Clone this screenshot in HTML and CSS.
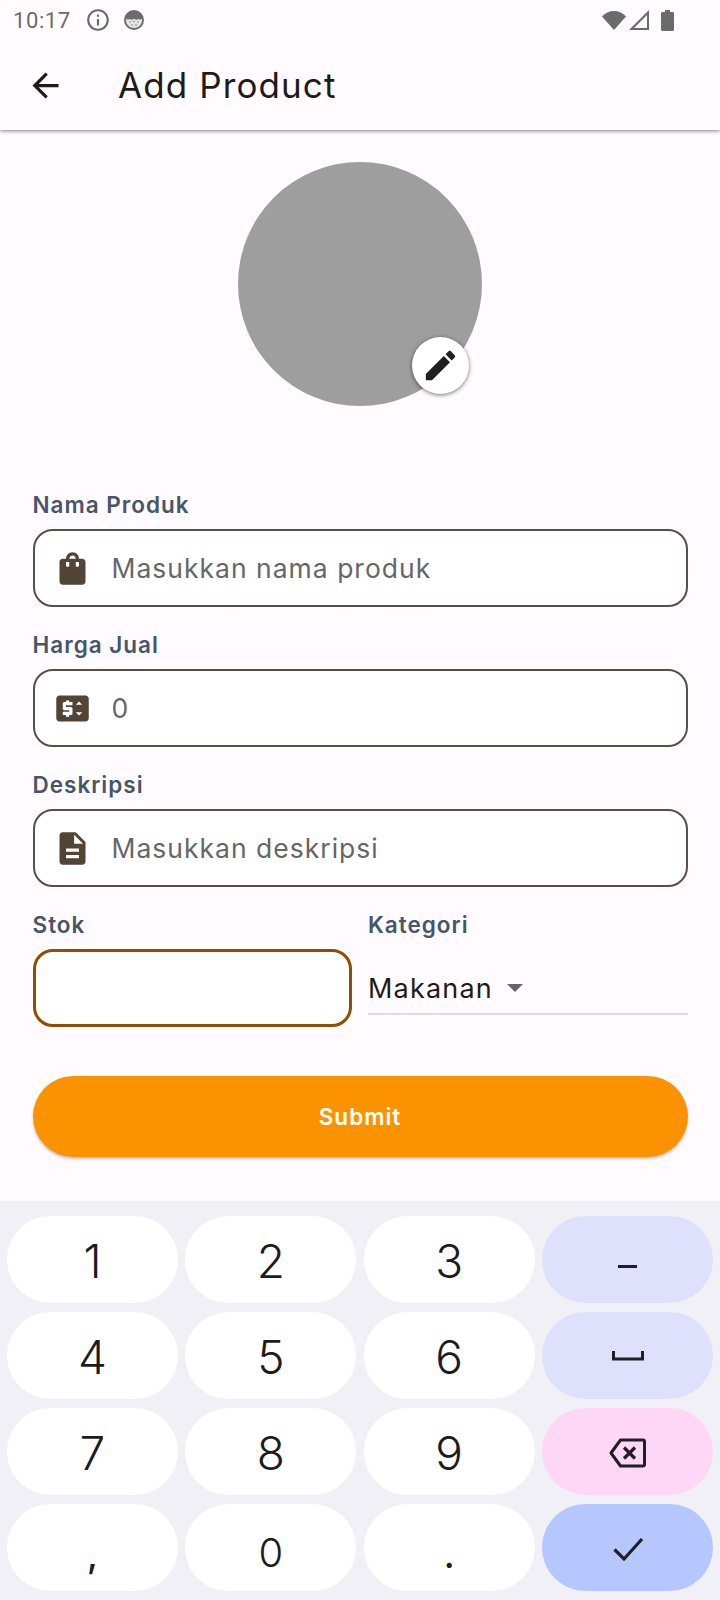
FILE: index.html
```html
<!DOCTYPE html>
<html lang="id">
<head>
    <meta charset="UTF-8">
    <meta name="viewport" content="width=device-width, initial-scale=1.0">
    <title>Add Product</title>
    <link rel="stylesheet" href="styles.css">
</head>
<body>
    <div class="screen">
        <header class="topbar">
            <div class="status">
                <span class="clock">10:17</span>
                <svg class="status-info" viewBox="0 0 24 24"><path fill-rule="evenodd" d="M11 7h2v2h-2zm0 4h2v6h-2zm1-9C6.48 2 2 6.48 2 12s4.48 10 10 10 10-4.48 10-10S17.52 2 12 2zm0 18c-4.41 0-8-3.59-8-8s3.59-8 8-8 8 3.59 8 8-3.59 8-8 8z"/></svg>
                <svg class="status-face" viewBox="0 0 20 20">
                    <circle cx="10" cy="10" r="10" fill="#6b6b6b"/>
                    <path d="M2 8.500c1 1.500 2.500 1.500 3.500.2C6.500 10 8 10 10 8.700c2 1.300 3.500 1.300 4.500 0 1 1.300 2.500 1.300 3.500-.2.500 5.500-3 9.500-8 9.500s-8.500-4-8-9.500z" fill="#e6e6e6"/>
                    <circle cx="6" cy="12" r=".8" fill="#808080"/><circle cx="10" cy="11.500" r=".8" fill="#808080"/><circle cx="14" cy="12" r=".8" fill="#808080"/>
                    <circle cx="8" cy="15" r=".8" fill="#808080"/><circle cx="12" cy="15" r=".8" fill="#808080"/>
                </svg>
                <span class="status-space"></span>
                <svg class="status-wifi" viewBox="0 0 24 20"><path d="M0 6.500C3 3 7.300 1 12 1s9 2 12 5.500L12 20z"/></svg>
                <svg class="status-signal" viewBox="0 0 20 20"><path fill-rule="evenodd" d="M20 0v20H0zM18 5 5 18h13z"/></svg>
                <svg class="status-battery" viewBox="0 0 13 21"><path d="M4 0h5v2h2.500c.8 0 1.500.7 1.500 1.500V19.500c0 .8-.7 1.500-1.500 1.500h-10C.7 21 0 20.300 0 19.500V3.500C0 2.700.7 2 1.500 2H4z"/></svg>
            </div>
            <div class="appbar">
                <svg class="back" viewBox="0 0 24 24"><path d="M20 11H7.830l5.590-5.590L12 4l-8 8 8 8 1.410-1.410L7.830 13H20v-2z"/></svg>
                <h1>Add Product</h1>
            </div>
        </header>

        <main class="form">
            <div class="avatar">
                <button class="edit" type="button">
                    <svg viewBox="0 0 24 24"><path d="M3 17.250V21h3.750L17.810 9.940l-3.750-3.750L3 17.250zM20.710 7.040c.39-.39.39-1.020 0-1.410l-2.340-2.340c-.39-.39-1.020-.39-1.410 0l-1.830 1.830 3.750 3.750 1.830-1.830z"/></svg>
                </button>
            </div>

            <div class="group first">
                <label for="nama">Nama Produk</label>
                <div class="field">
                    <svg viewBox="0 0 24 24"><path fill-rule="evenodd" d="M18 6h-2c0-2.210-1.790-4-4-4S8 3.790 8 6H6c-1.100 0-2 .9-2 2v12c0 1.100.9 2 2 2h12c1.100 0 2-.9 2-2V8c0-1.100-.9-2-2-2zm-8 4c0 .55-.45 1-1 1s-1-.45-1-1V8h2v2zm2-6c1.100 0 2 .9 2 2h-4c0-1.100.9-2 2-2zm4 6c0 .55-.45 1-1 1s-1-.45-1-1V8h2v2z"/></svg>
                    <input id="nama" type="text" placeholder="Masukkan nama produk">
                </div>
            </div>

            <div class="group">
                <label for="harga">Harga Jual</label>
                <div class="field">
                    <svg viewBox="0 0 24 24"><path fill-rule="evenodd" d="M20 4H4c-1.110 0-1.990.89-1.990 2L2 18c0 1.110.89 2 2 2h16c1.110 0 2-.89 2-2V6c0-1.110-.89-2-2-2zm-8 6H8v1h3c.55 0 1 .45 1 1v3c0 .55-.45 1-1 1h-1v1H8v-1H6v-2h4v-1H7c-.55 0-1-.45-1-1V9c0-.55.45-1 1-1h1V7h2v1h2v2zm4 6.250-2-2h4l-2 2zM14 9.750l2-2 2 2h-4z"/></svg>
                    <input id="harga" type="text" placeholder="0">
                </div>
            </div>

            <div class="group">
                <label for="deskripsi">Deskripsi</label>
                <div class="field">
                    <svg viewBox="0 0 24 24"><path fill-rule="evenodd" d="M14 2H6c-1.100 0-1.990.9-1.990 2L4 20c0 1.100.89 2 1.990 2H18c1.100 0 2-.9 2-2V8l-6-6zm2 16H8v-2h8v2zm0-4H8v-2h8v2zm-3-5V3.500L18.500 9H13z"/></svg>
                    <input id="deskripsi" type="text" placeholder="Masukkan deskripsi">
                </div>
            </div>

            <div class="split">
                <div>
                    <label for="stok">Stok</label>
                    <div class="field focused">
                        <input id="stok" type="text">
                    </div>
                </div>
                <div>
                    <label>Kategori</label>
                    <div class="dropdown">
                        <span>Makanan</span>
                        <i class="caret"></i>
                    </div>
                </div>
            </div>

            <button class="submit" type="button">Submit</button>
        </main>

        <section class="keyboard">
            <div class="key">1</div>
            <div class="key">2</div>
            <div class="key">3</div>
            <div class="key side">
                <svg viewBox="0 0 34 34"><rect x="7" y="21" width="19" height="3"/></svg>
            </div>
            <div class="key">4</div>
            <div class="key">5</div>
            <div class="key">6</div>
            <div class="key side">
                <svg viewBox="0 0 34 34"><path d="M1 11h3v6.500h26V11h3v9.500H1z"/></svg>
            </div>
            <div class="key">7</div>
            <div class="key">8</div>
            <div class="key">9</div>
            <div class="key del">
                <svg viewBox="0 0 40 34"><path fill="none" stroke="#1f1f24" stroke-width="3" stroke-linejoin="round" d="M12.500 4H35a1.500 1.500 0 0 1 1.500 1.500v23A1.500 1.500 0 0 1 35 30H12.500L3 17z"/><path fill="none" stroke="#1f1f24" stroke-width="3.200" d="M16 11.500l11 11M27 11.500l-11 11"/></svg>
            </div>
            <div class="key low">,</div>
            <div class="key zero">0</div>
            <div class="key low">.</div>
            <div class="key done">
                <svg viewBox="0 0 34 34"><path fill="none" stroke="#1f1f24" stroke-width="3.200" d="M3.500 17.500l9.500 9.500L31 7"/></svg>
            </div>
        </section>
    </div>
</body>
</html>
```

FILE: styles.css
```css
* {
    box-sizing: border-box;
}

body {
    margin: 0;
    background-color: #fffbff;
    color: #1f1b16;
    font-family: Inter, "Noto Sans", sans-serif;
}

.screen {
    width: 720px;
    height: 1600px;
    display: flex;
    flex-direction: column;
    overflow: hidden;
}

/* barra de cima */
.topbar {
    height: 130px;
    flex-shrink: 0;
    box-shadow: 0 1px 4px rgba(0, 0, 0, 0.5);
}

.status {
    height: 40px;
    padding: 0 14px 0 13px;
    display: flex;
    align-items: center;
    fill: #6b6b6b;
}

.clock {
    font-family: Roboto, sans-serif;
    font-size: 22px;
    color: #6b6b6b;
    letter-spacing: 0.6px;
}

.status-info {
    width: 26px;
    height: 26px;
    margin-left: 14px;
}

.status-face {
    width: 20px;
    height: 20px;
    margin-left: 13px;
}

.status-space {
    flex: 1;
}

.status-wifi {
    width: 24px;
    height: 20px;
}

.status-signal {
    width: 20px;
    height: 20px;
    margin-left: 3px;
}

.status-battery {
    width: 13px;
    height: 21px;
    margin-left: 12px;
    margin-right: 32px;
}

.appbar {
    height: 90px;
    display: flex;
    align-items: center;
    padding-left: 26px;
}

.back {
    width: 39px;
    height: 39px;
    fill: #1f1b16;
}

.appbar h1 {
    margin: 0 0 0 53px;
    font-size: 35px;
    font-weight: 400;
    letter-spacing: 1.1px;
}

/* formulario */
.form {
    padding: 32px 32.500px 0;
}

.avatar {
    position: relative;
    width: 244px;
    height: 244px;
    margin: 0 auto;
    border-radius: 50%;
    background-color: #9e9e9e;
}

.edit {
    position: absolute;
    left: 174px;
    top: 175px;
    width: 57px;
    height: 57px;
    padding: 0;
    border: none;
    border-radius: 50%;
    background-color: #fff;
    box-shadow: 0 1px 4px rgba(0, 0, 0, 0.55);
    display: flex;
    align-items: center;
    justify-content: center;
}

.edit svg {
    width: 39px;
    height: 39px;
    fill: #1f1f1f;
}

.group {
    margin-top: 22px;
}

.group.first {
    margin-top: 83px;
}

label {
    display: block;
    height: 28px;
    margin-bottom: 12px;
    font-size: 22.500px;
    line-height: 31px;
    font-weight: 600;
    letter-spacing: 1px;
    color: #475569;
}

.field {
    height: 78px;
    padding-left: 18px;
    display: flex;
    align-items: center;
    gap: 20px;
    background-color: #fff;
    border: 2px solid #5a4f44;
    border-radius: 20px;
}

.field svg {
    width: 39px;
    height: 39px;
    flex-shrink: 0;
    fill: #524437;
}

.field input {
    flex: 1;
    min-width: 0;
    border: none;
    outline: none;
    padding: 0;
    background: transparent;
    font-family: inherit;
    font-size: 26.500px;
    letter-spacing: 1px;
    color: #1f1b16;
}

.field input::placeholder {
    color: #666;
    opacity: 1;
}

.field.focused {
    border: 3px solid #8f4e00;
}

.split {
    margin-top: 22px;
    display: grid;
    grid-template-columns: minmax(0, 1fr) minmax(0, 1fr);
    gap: 16px;
}

.dropdown {
    height: 66px;
    padding-top: 14px;
    display: flex;
    align-items: center;
    gap: 14px;
    border-bottom: 2px solid #dcdcdc;
    font-size: 27px;
    letter-spacing: 1.2px;
}

.caret {
    width: 0;
    height: 0;
    border-left: 8px solid transparent;
    border-right: 8px solid transparent;
    border-top: 8px solid #666;
}

.submit {
    display: block;
    width: 100%;
    height: 81px;
    margin-top: 49px;
    border: none;
    border-radius: 41px;
    background-color: #fb9300;
    box-shadow: 0 2px 3px rgba(0, 0, 0, 0.25);
    color: #fff;
    font-family: inherit;
    font-size: 22.500px;
    font-weight: 600;
    letter-spacing: 1px;
}

/* teclado */
.keyboard {
    margin-top: auto;
    height: 399px;
    padding: 15px 7px 9px;
    display: grid;
    grid-template-columns: repeat(4, 1fr);
    grid-auto-rows: 87px;
    gap: 9px 7.500px;
    background-color: #f0f0f6;
}

.key {
    display: flex;
    align-items: center;
    justify-content: center;
    border-radius: 44px;
    background-color: #fff;
    color: #1c1c20;
    font-size: 46px;
    font-weight: 350;
    padding-top: 3px;
}

.key.zero {
    font-size: 40px;
    padding-top: 10px;
}

.key.low {
    font-size: 36px;
    font-weight: 500;
    padding-top: 14px;
}

.key svg {
    width: 34px;
    height: 34px;
    fill: #1f1f24;
}

.key.del svg {
    width: 40px;
}

.key.side {
    background-color: #dfe0fb;
}

.key.del {
    background-color: #fdd7f5;
}

.key.done {
    background-color: #b6c6ff;
}
```
